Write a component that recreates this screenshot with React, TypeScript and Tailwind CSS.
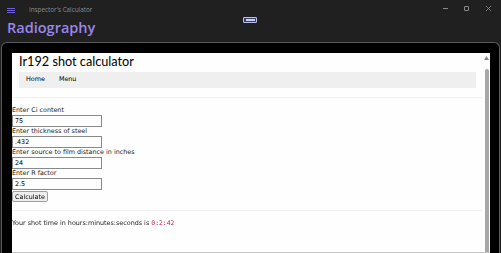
import React from 'react';

const fields = [
  { label: 'Enter Ci content', value: '75' },
  { label: 'Enter thickness of steel', value: '.432' },
  { label: 'Enter source to film distance in inches', value: '24' },
  { label: 'Enter R factor', value: '2.5' },
];

const App: React.FC = () => {
  return (
    <div className="w-[501px] h-[253px] overflow-hidden bg-[#202020] flex flex-col font-['Open_Sans',sans-serif]">
      {/* Title bar */}
      <div className="h-[17px] flex items-center pl-[7px] pr-[10px] shrink-0 opacity-[0.999]">
        <div className="flex flex-col gap-[1px] w-[8px] mt-[3px]">
          <div className="h-[1px] bg-[#6f5fd6]"></div>
          <div className="h-[1px] bg-[#6f5fd6]"></div>
          <div className="h-[1px] bg-[#6f5fd6]"></div>
        </div>
        <span className="ml-[14px] mt-[2px] text-[6.3px] text-[#8c8c8c]">Inspector's Calculator</span>
        <div className="ml-auto flex items-center gap-[16px] mt-[-1px] text-[#8a8a8a]">
          <div className="w-[5px] h-[1px] bg-[#8a8a8a]"></div>
          <div className="w-[5px] h-[5px] border border-[#8a8a8a] rounded-[1px]"></div>
          <svg width="5" height="5" viewBox="0 0 5 5" className="ml-[1px]">
            <path d="M0 0 L5 5 M5 0 L0 5" stroke="#8a8a8a" strokeWidth="0.8" />
          </svg>
        </div>
      </div>

      {/* Header */}
      <div className="h-[25px] flex items-start pl-[7px] shrink-0 relative">
        <span className="text-[14.5px] leading-[22px] font-semibold text-[#9b86ea]">Radiography</span>
        <div className="absolute left-[243px] top-[0px] w-[14px] h-[6px] border border-[#b9c0f0] bg-[#3a3f6a] rounded-[1px] flex items-center justify-center">
          <div className="w-[9px] h-[2px] bg-[#c8cdf5]"></div>
        </div>
      </div>

      {/* Content panel */}
      <div className="flex-1 mx-[1px] bg-black border border-[#5a5a5a] border-b-0 rounded-t-[6px] pt-[10px] pl-[10px] pr-[9px] flex">
        <div className="flex-1 bg-white flex border-b border-[#c8c8c8] opacity-[0.999]">
          <div className="flex-1 flex flex-col font-['DejaVu_Sans',sans-serif] text-[#222]">
            <div className="px-[7px]">
              <h1 className="font-['Lato',sans-serif] text-[12.7px] leading-[17px] font-normal text-black">Ir192 shot calculator</h1>
              <div className="mt-[2px] h-[16px] bg-[#f0f0f0] flex items-center pl-[7px] gap-[14px] text-[6.4px] text-black">
                <span>Home</span>
                <span>Menu</span>
              </div>
            </div>
            <div className="mt-[9px] h-[1px] bg-[#f2f2f2]"></div>

            <form className="mt-[8px] flex flex-col text-[6.4px] leading-[8px]">
              {fields.map((f) => (
                <div key={f.label} className="flex flex-col">
                  <label className="h-[9px] text-[#222]">{f.label}</label>
                  <input
                    readOnly
                    value={f.value}
                    className="w-[90px] h-[12px] border border-[#8a8a8a] px-[2px] text-[6.4px] text-black outline-none"
                  />
                </div>
              ))}
              <button
                type="button"
                className="mt-[1px] w-[36px] h-[11px] bg-[#efefef] border border-[#a0a0a0] rounded-[2px] text-[6.4px] text-black flex items-center justify-center"
              >
                Calculate
              </button>
            </form>

            <div className="mt-[8px] h-[1px] bg-[#f2f2f2] mr-[1px]"></div>
            <p className="mt-[8px] text-[6.4px] text-[#222]">
              Your shot time in hours:minutes:seconds is{' '}
              <span className="font-['DejaVu_Sans_Mono',monospace] text-[#c7254e]">0:2:42</span>
            </p>
          </div>

          {/* Scrollbar */}
          <div className="w-[7px] flex flex-col items-center pt-[3px]">
            <svg width="5" height="4" viewBox="0 0 5 4">
              <path d="M2.5 0 L5 4 L0 4 Z" fill="#8a8a8a" />
            </svg>
            <div className="mt-[9px] flex-1 w-[4px] bg-[#a8a8a8] rounded-t-[2px]"></div>
          </div>
        </div>
      </div>
    </div>
  );
};

export default App;
